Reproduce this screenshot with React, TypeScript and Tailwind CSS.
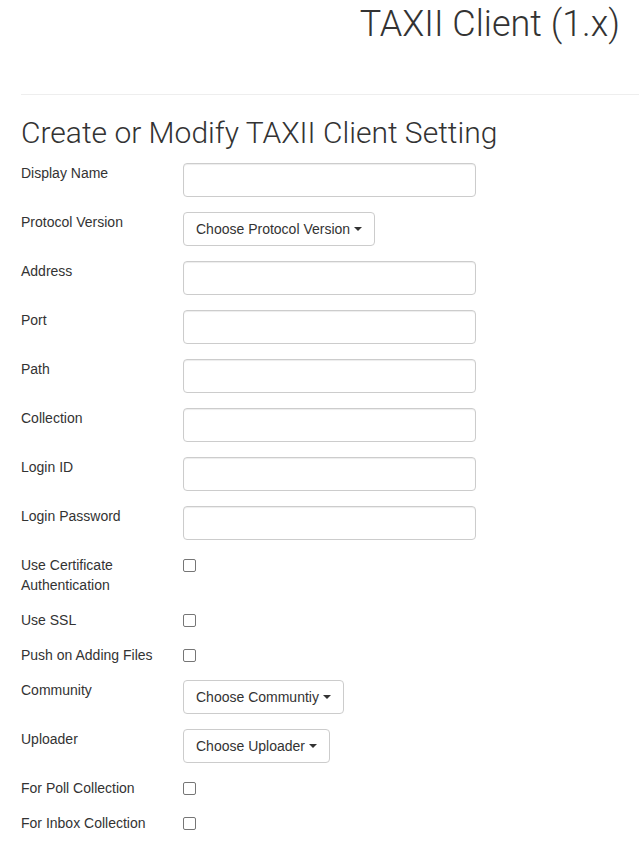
import React from 'react';

type Row =
  | { kind: 'text'; label: string }
  | { kind: 'select'; label: string; placeholder: string }
  | { kind: 'check'; label: string };

const rows: Row[] = [
  { kind: 'text', label: 'Display Name' },
  { kind: 'select', label: 'Protocol Version', placeholder: 'Choose Protocol Version' },
  { kind: 'text', label: 'Address' },
  { kind: 'text', label: 'Port' },
  { kind: 'text', label: 'Path' },
  { kind: 'text', label: 'Collection' },
  { kind: 'text', label: 'Login ID' },
  { kind: 'text', label: 'Login Password' },
  { kind: 'check', label: 'Use Certificate Authentication' },
  { kind: 'check', label: 'Use SSL' },
  { kind: 'check', label: 'Push on Adding Files' },
  { kind: 'select', label: 'Community', placeholder: 'Choose Communtiy' },
  { kind: 'select', label: 'Uploader', placeholder: 'Choose Uploader' },
  { kind: 'check', label: 'For Poll Collection' },
  { kind: 'check', label: 'For Inbox Collection' },
];

const Caret = () => (
  <span className="ml-[4px] inline-block h-0 w-0 border-x-4 border-t-4 border-x-transparent border-t-[#333] align-middle" />
);

const Control: React.FC<{ row: Row }> = ({ row }) => {
  if (row.kind === 'text') {
    return (
      <input
        type="text"
        className="h-[34px] w-[293px] rounded-[4px] border border-[#ccc] bg-white px-3 text-sm text-[#555] shadow-[inset_0_1px_1px_rgba(0,0,0,0.075)] outline-none"
      />
    );
  }
  if (row.kind === 'select') {
    return (
      <button
        type="button"
        className="flex h-[34px] items-center rounded-[4px] border border-[#ccc] bg-white px-3 text-sm leading-5 text-[#333]"
      >
        {row.placeholder}
        <Caret />
      </button>
    );
  }
  return (
    <span className="mt-1 inline-block h-[13px] w-[13px] rounded-[2px] border border-[#767676] bg-white" />
  );
};

export default function App() {
  return (
    <div
      className="min-h-[841px] bg-white px-[21px] text-[#333]"
      style={{ fontFamily: '"Liberation Sans", Arial, sans-serif' }}
    >
      <h1
        className="-mr-[2px] pt-[5px] text-right text-[36px] leading-[1.1] font-light text-[#333]"
        style={{ fontFamily: 'Roboto, sans-serif' }}
      >
        TAXII Client (1.x)
      </h1>
      <div className="mt-[49px] -mr-[21px] border-t border-[#eee]" />
      <h2
        className="mt-[21px] text-[30px] leading-[1.1] font-light text-[#333]"
        style={{ fontFamily: 'Roboto, sans-serif' }}
      >
        Create or Modify TAXII Client Setting
      </h2>
      <form className="mt-[14px]">
        {rows.map((row) => (
          <div key={row.label} className="mb-[15px] flex items-start">
            <label className="w-[162px] pr-4 text-sm leading-5 text-[#333]">{row.label}</label>
            <Control row={row} />
          </div>
        ))}
      </form>
    </div>
  );
}
